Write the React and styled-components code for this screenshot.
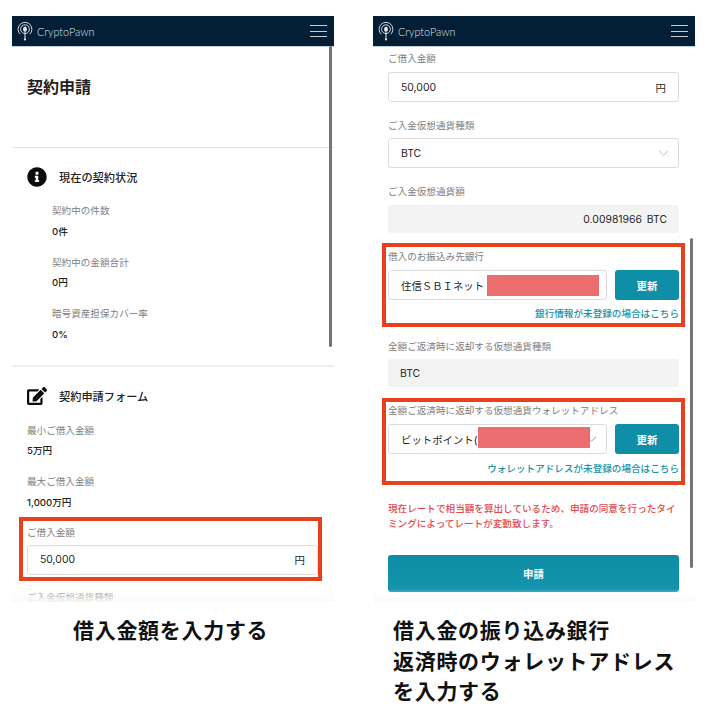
import React from "react";
import styled, { createGlobalStyle } from "styled-components";
import { FaInfoCircle, FaEdit } from "react-icons/fa";

const GlobalStyle = createGlobalStyle`
  html, body {
    margin: 0;
    background: #fff;
  }
  body {
    font-family: Inter, "Noto Sans CJK JP", sans-serif;
  }
`;

const Page = styled.div`
  display: grid;
  grid-template-columns: 322px 322px;
  column-gap: 39px;
  padding: 16px 0 0 12px;
  width: 717px;
  height: 726px;
  box-sizing: border-box;
  overflow: hidden;
`;

const Column = styled.div`
  display: flex;
  flex-direction: column;
`;

const Phone = styled.div`
  position: relative;
  height: 586px;
  overflow: hidden;
  background: #fff;
  &::after {
    content: "";
    position: absolute;
    left: 0;
    right: 0;
    bottom: 0;
    height: 13px;
    background: linear-gradient(rgba(248, 248, 246, 0), rgba(250, 250, 248, 0.95));
  }
`;

const Header = styled.header`
  display: flex;
  align-items: center;
  justify-content: space-between;
  height: 30px;
  padding: 0 7px 0 5px;
  background: #041e36;
  border-bottom: 1px solid #c5d0da;
  box-sizing: content-box;
  margin-bottom: -1px;
`;

const Brand = styled.div`
  display: flex;
  align-items: center;
  gap: 4px;
  color: #dfe4e9;
  font: 300 10.8px Lato, sans-serif;
`;

const Burger = styled.div`
  display: flex;
  flex-direction: column;
  gap: 4.4px;
  width: 17px;
  span {
    height: 1px;
    background: #c9ced4;
  }
`;

const ScrollThumb = styled.div`
  position: absolute;
  right: 2px;
  top: ${(p) => p.$top}px;
  height: ${(p) => p.$height}px;
  width: 3px;
  border-radius: 2px;
  background: #757575;
`;

const TitleBlock = styled.div`
  height: 102px;
  box-sizing: border-box;
  padding: 31px 15px 0;
  border-bottom: 1px solid #e6e6e6;
`;

const Title = styled.h1`
  margin: 0;
  font-size: 16px;
  line-height: 20px;
  font-weight: 700;
  color: #222;
`;

const Section = styled.section`
  padding: 19px 16px ${(p) => p.$bottom || 0}px 15px;
  border-bottom: ${(p) => (p.$divider ? "2px solid #eeeeee" : "none")};
`;

const SectionHead = styled.div`
  display: flex;
  align-items: center;
  gap: 12px;
  height: 20px;
  font-size: 11.2px;
  font-weight: 500;
  color: #222;
  svg {
    width: 20px;
    height: 20px;
    color: #0c0c0c;
    flex: none;
  }
`;

const InfoList = styled.div`
  margin: ${(p) => p.$top}px 0 0 ${(p) => p.$indent || 0}px;
  display: flex;
  flex-direction: column;
  row-gap: ${(p) => p.$gap}px;
`;

const Label = styled.div`
  font-size: 9.6px;
  line-height: 14px;
  color: #808080;
  white-space: nowrap;
`;

const Value = styled.div`
  margin-top: 6.5px;
  font-size: 9.6px;
  line-height: 14px;
  font-weight: 500;
  color: #222;
`;

const Frame = styled.div`
  border: 4px solid #e8401c;
  box-sizing: border-box;
  margin: ${(p) => p.$margin};
  padding: ${(p) => p.$padding};
`;

const FieldLabel = styled(Label)`
  margin-top: ${(p) => p.$top || 0}px;
  margin-bottom: ${(p) => (p.$bottom === undefined ? 6 : p.$bottom)}px;
`;

const Input = styled.div`
  position: relative;
  display: flex;
  align-items: center;
  justify-content: space-between;
  height: 30px;
  box-sizing: border-box;
  padding: 0 12px;
  flex: ${(p) => (p.$grow ? "1" : "none")};
  min-width: 0;
  border: 1px solid #dcdcdc;
  border-radius: 3px;
  background: #fff;
  font-size: 10.4px;
  color: #262626;
  white-space: nowrap;
  overflow: hidden;
`;

const ReadOnly = styled.div`
  display: flex;
  align-items: center;
  justify-content: ${(p) => (p.$end ? "flex-end" : "flex-start")};
  height: 28px;
  padding: 0 12px;
  border-radius: 3px;
  background: #f3f3f3;
  font-size: 10.4px;
  word-spacing: 2px;
  color: #262626;
`;

const Redaction = styled.div`
  position: absolute;
  left: ${(p) => p.$left}px;
  top: ${(p) => p.$top}px;
  width: 112px;
  height: 21px;
  background: #ec6d6f;
`;

const Chevron = styled.svg`
  flex: none;
  width: 11px;
  height: 6px;
  margin-right: -3px;
`;

const InputRow = styled.div`
  display: flex;
  gap: 8px;
`;

const UpdateButton = styled.div`
  display: flex;
  align-items: center;
  justify-content: center;
  flex: none;
  width: 64px;
  height: 30px;
  border-radius: 3px;
  background: #0f8ea8;
  color: #fff;
  font-size: 10.4px;
  font-weight: 700;
`;

const HelpLink = styled.div`
  margin-top: ${(p) => p.$top}px;
  text-align: right;
  font-size: 9.6px;
  line-height: 14px;
  font-weight: 500;
  color: #1893a8;
  white-space: nowrap;
`;

const Notice = styled.p`
  margin: 16px 0 0;
  font-size: 9.6px;
  line-height: 15.4px;
  font-weight: 500;
  color: #e5484d;
`;

const SubmitButton = styled.div`
  display: flex;
  align-items: center;
  justify-content: center;
  margin-top: 23px;
  height: 37px;
  border-radius: 3px;
  background: linear-gradient(#0e8ca6, #1495ad);
  color: #fff;
  font-size: 10.4px;
  font-weight: 700;
`;

const FormBody = styled.div`
  padding: 6px 16px 0 15px;
`;

const Caption = styled.div`
  padding: 14px 0 0 ${(p) => p.$indent}px;
  font-size: 21px;
  line-height: 30.5px;
  letter-spacing: 0.7px;
  font-weight: 700;
  color: #111;
  white-space: nowrap;
`;

function Logo() {
  return (
    <svg width="16" height="20" viewBox="0 0 16 20" fill="none" stroke="#e4e8ec">
      <path d="M3.2 13.2a6.9 6.9 0 1 1 9.6 0" strokeWidth="0.9" />
      <circle cx="8" cy="8.2" r="4.4" strokeWidth="0.9" />
      <ellipse cx="8" cy="8.2" rx="1.9" ry="2.6" fill="#e4e8ec" stroke="none" />
      <path d="M8 10.5v7.4" strokeWidth="1" />
      <circle cx="8" cy="18.4" r="1.1" fill="#e4e8ec" stroke="none" />
    </svg>
  );
}

function AppHeader() {
  return (
    <Header>
      <Brand>
        <Logo />
        CryptoPawn
      </Brand>
      <Burger>
        <span />
        <span />
        <span />
      </Burger>
    </Header>
  );
}

function DownArrow({ color }) {
  return (
    <Chevron viewBox="0 0 11 6" fill="none" stroke={color} strokeWidth="0.9">
      <path d="M1 0.8l4.5 4.4L10 0.8" />
    </Chevron>
  );
}

const status = [
  { label: "契約中の件数", value: "0件" },
  { label: "契約中の金額合計", value: "0円" },
  { label: "暗号資産担保カバー率", value: "0%" },
];

const limits = [
  { label: "最小ご借入金額", value: "5万円" },
  { label: "最大ご借入金額", value: "1,000万円" },
];

function Info({ items, top, gap, indent }) {
  return (
    <InfoList $top={top} $gap={gap} $indent={indent}>
      {items.map((item) => (
        <div key={item.label}>
          <Label>{item.label}</Label>
          <Value>{item.value}</Value>
        </div>
      ))}
    </InfoList>
  );
}

export default function App() {
  return (
    <>
      <GlobalStyle />
      <Page>
        <Column>
          <Phone>
            <AppHeader />
            <TitleBlock>
              <Title>契約申請</Title>
            </TitleBlock>
            <Section $divider $bottom={23}>
              <SectionHead>
                <FaInfoCircle />
                現在の契約状況
              </SectionHead>
              <Info items={status} top={17} gap={17} indent={25} />
            </Section>
            <Section>
              <SectionHead>
                <FaEdit />
                契約申請フォーム
              </SectionHead>
              <Info items={limits} top={18} gap={17} />
              <Frame $margin="7px -4px 0 -8px" $padding="5px 0 2px 4px">
                <FieldLabel $bottom={5}>ご借入金額</FieldLabel>
                <Input>
                  50,000
                  <span>円</span>
                </Input>
              </Frame>
              <FieldLabel $top={10}>ご入金仮想通貨種類</FieldLabel>
            </Section>
            <ScrollThumb $top={30} $height={301} />
          </Phone>
          <Caption $indent={61}>借入金額を入力する</Caption>
        </Column>

        <Column>
          <Phone>
            <AppHeader />
            <FormBody>
              <FieldLabel>ご借入金額</FieldLabel>
              <Input>
                50,000
                <span>円</span>
              </Input>
              <FieldLabel $top={17} $bottom={5}>ご入金仮想通貨種類</FieldLabel>
              <Input>
                BTC
                <DownArrow color="#b5b5b5" />
              </Input>
              <FieldLabel $top={17}>ご入金仮想通貨額</FieldLabel>
              <ReadOnly $end>0.00981966 BTC</ReadOnly>

              <Frame $margin="10px -6px 0" $padding="3px 2px 2px">
                <FieldLabel>借入のお振込み先銀行</FieldLabel>
                <InputRow>
                  <Input $grow>
                    住信ＳＢＩネット
                    <Redaction $left={98} $top={4} />
                  </Input>
                  <UpdateButton>更新</UpdateButton>
                </InputRow>
                <HelpLink $top={7}>銀行情報が未登録の場合はこちら</HelpLink>
              </Frame>

              <FieldLabel $top={13} $bottom={5}>全額ご返済時に返却する仮想通貨種類</FieldLabel>
              <ReadOnly>BTC</ReadOnly>

              <Frame $margin="11px -6px 0" $padding="2px 2px 5px">
                <FieldLabel>全額ご返済時に返却する仮想通貨ウォレットアドレス</FieldLabel>
                <InputRow>
                  <Input $grow>
                    ビットポイント(
                    <DownArrow color="#8c8c8c" />
                    <Redaction $left={89} $top={2} />
                  </Input>
                  <UpdateButton>更新</UpdateButton>
                </InputRow>
                <HelpLink $top={8}>ウォレットアドレスが未登録の場合はこちら</HelpLink>
              </Frame>

              <Notice>
                現在レートで相当額を算出しているため、申請の同意を行ったタイミングによってレートが変動致します。
              </Notice>
              <SubmitButton>申請</SubmitButton>
            </FormBody>
            <ScrollThumb $top={222} $height={330} />
          </Phone>
          <Caption $indent={20}>
            借入金の振り込み銀行
            <br />
            返済時のウォレットアドレス
            <br />
            を入力する
          </Caption>
        </Column>
      </Page>
    </>
  );
}
